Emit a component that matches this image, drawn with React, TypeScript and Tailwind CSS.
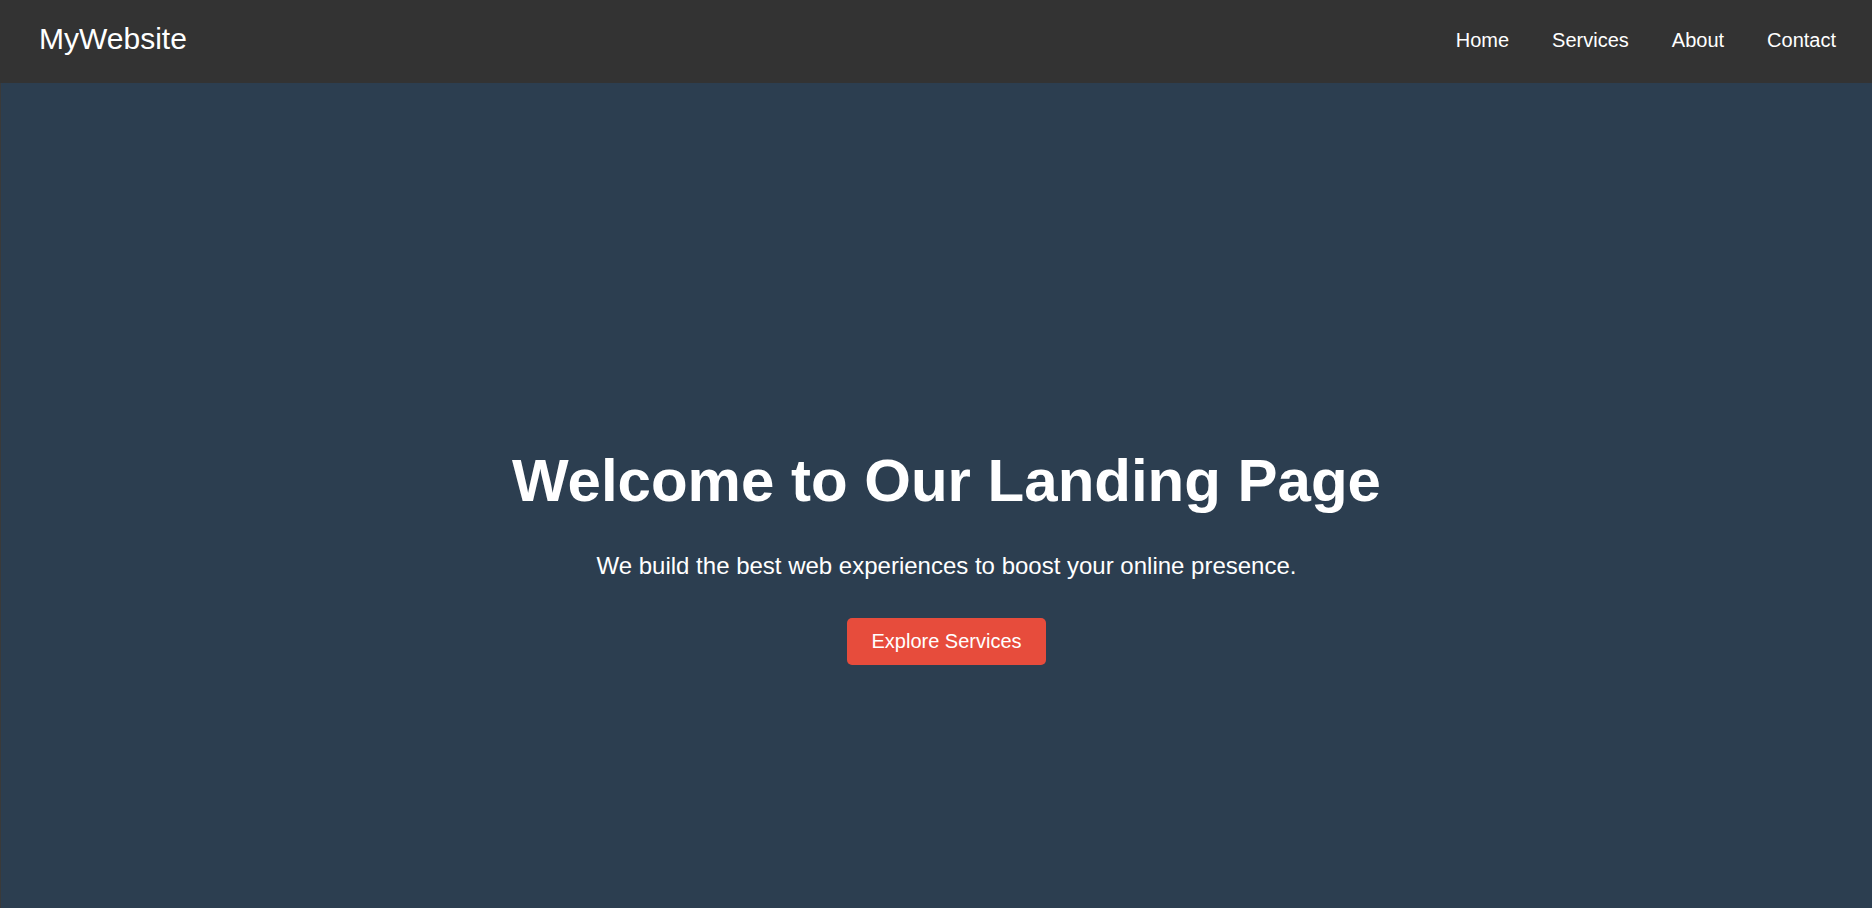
const navLinks = ['Home', 'Services', 'About', 'Contact'];

function Header() {
  return (
    <header className="flex h-[83px] items-center justify-between bg-[#333333] pl-[39px] pr-[36px] text-white">
      <a href="#" className="mb-[5px] text-[30px] leading-[1.15]">
        MyWebsite
      </a>
      <nav className="mb-[2px] flex gap-[43px]">
        {navLinks.map((link) => (
          <a key={link} href="#" className="text-[20px] leading-[1.15]">
            {link}
          </a>
        ))}
      </nav>
    </header>
  );
}

function Hero() {
  return (
    <section className="flex h-[908px] flex-col items-center justify-center border-l border-[#3a3a3a] bg-[#2c3e50] pl-[20px] text-center text-white">
      <h1 className="mt-[37px] mb-[37px] text-[60px] font-bold leading-[1.15]">Welcome to Our Landing Page</h1>
      <p className="mb-[39px] text-[24px] leading-[1.15]">
        We build the best web experiences to boost your online presence.
      </p>
      <button className="rounded-[5px] bg-[#e74c3c] px-[24px] py-[12px] text-[20px] leading-[1.15] text-white">
        Explore Services
      </button>
    </section>
  );
}

export default function App() {
  return (
    <div className="font-['Liberation_Sans',Arial,sans-serif]">
      <Header />
      <Hero />
    </div>
  );
}
